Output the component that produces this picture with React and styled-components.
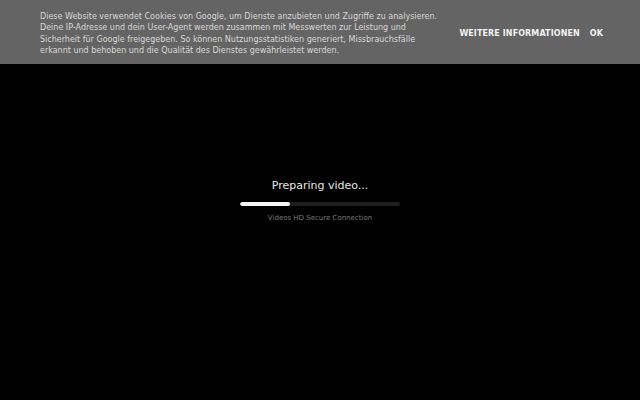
import styled, { createGlobalStyle } from "styled-components";

const Global = createGlobalStyle`
  html, body {
    margin: 0;
    padding: 0;
    background: #000;
    font-family: "DejaVu Sans", sans-serif;
  }
`;

const Page = styled.div`
  width: 640px;
  height: 400px;
  background: #000;
  display: flex;
  flex-direction: column;
  overflow: hidden;
`;

const Banner = styled.div`
  height: 64px;
  background: #646464;
  display: flex;
  align-items: center;
  padding: 3px 37px 0 40px;
  box-sizing: border-box;
`;

const Notice = styled.p`
  margin: 0;
  flex: 1;
  font-size: 8px;
  line-height: 11.5px;
  color: #d8d8d8;
  max-width: 400px;
`;

const Actions = styled.div`
  margin-left: auto;
  display: flex;
  gap: 10px;
`;

const ActionLink = styled.span`
  font-size: 8px;
  font-weight: bold;
  color: #f2f2f2;
  letter-spacing: 0.1px;
`;

const Stage = styled.div`
  flex: 1;
  display: flex;
  flex-direction: column;
  align-items: center;
  justify-content: center;
  padding-bottom: 64px;
`;

const Status = styled.div`
  font-size: 11px;
  color: #e6e6e6;
  margin-bottom: 10px;
`;

const Track = styled.div`
  width: 160px;
  height: 4px;
  background: #1e1e1e;
  border-radius: 2px;
  overflow: hidden;
`;

const Fill = styled.div`
  height: 100%;
  background: #f4f4f4;
  border-radius: 2px;
`;

const Caption = styled.div`
  margin-top: 8px;
  font-size: 7px;
  color: #7a7a7a;
`;

export default function App() {
  const progress = 31;
  return (
    <Page>
      <Global />
      <Banner>
        <Notice>
          Diese Website verwendet Cookies von Google, um Dienste anzubieten und Zugriffe zu analysieren.
          Deine IP-Adresse und dein User-Agent werden zusammen mit Messwerten zur Leistung und
          Sicherheit für Google freigegeben. So können Nutzungsstatistiken generiert, Missbrauchsfälle
          erkannt und behoben und die Qualität des Dienstes gewährleistet werden.
        </Notice>
        <Actions>
          <ActionLink>WEITERE INFORMATIONEN</ActionLink>
          <ActionLink>OK</ActionLink>
        </Actions>
      </Banner>
      <Stage>
        <Status>Preparing video...</Status>
        <Track>
          <Fill style={{ width: `${progress}%` }} />
        </Track>
        <Caption>Videos HD Secure Connection</Caption>
      </Stage>
    </Page>
  );
}
